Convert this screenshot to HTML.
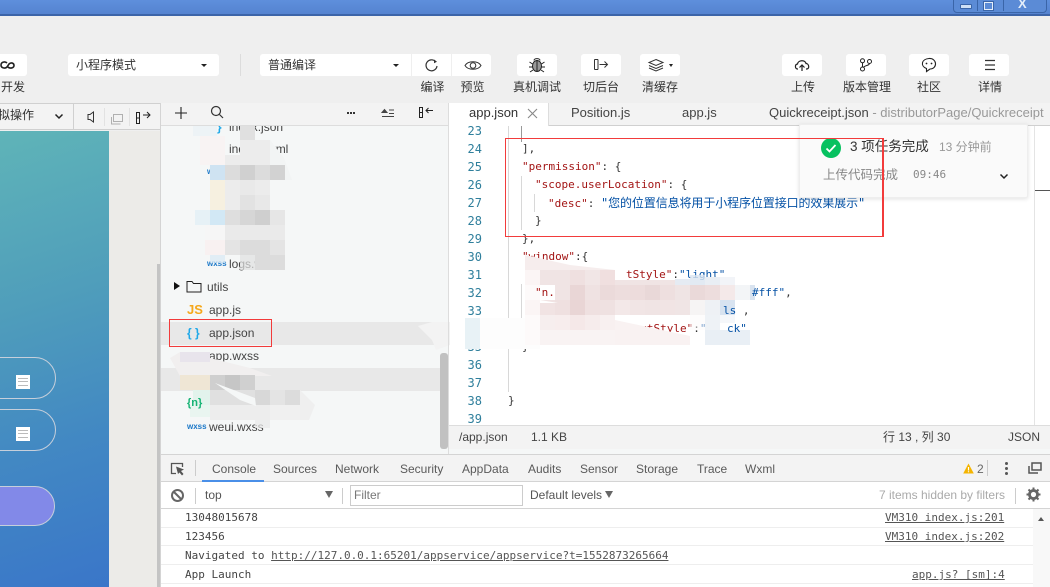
<!DOCTYPE html>
<html><head><meta charset="utf-8"><style>
html,body{margin:0;padding:0;width:1050px;height:587px;overflow:hidden;background:#efefef}
body{position:relative;font-family:"Liberation Sans","Noto Sans CJK SC",sans-serif;font-size:12px;color:#333}
.a{position:absolute}
.t{position:absolute;white-space:nowrap}
.b{position:absolute;background:#fff;border-radius:3px;top:54px;height:22px}
.l{position:absolute;top:79px;line-height:17px;font-size:12px;color:#333;white-space:nowrap;text-align:center}
.c{position:absolute;white-space:nowrap;font-family:"DejaVu Sans Mono","Noto Sans CJK SC",monospace;font-size:11px;line-height:18px;height:18px}
.n{position:absolute;left:460px;width:22px;text-align:right;font-family:"DejaVu Sans Mono",monospace;font-size:12px;line-height:18px;color:#2f7f9c}
.k{color:#a31515}.s{color:#0451a5}
.f{position:absolute;white-space:nowrap;font-size:12px;line-height:18px;color:#444}
.m{position:absolute;white-space:nowrap;font-family:"DejaVu Sans Mono",monospace;font-size:11px;line-height:16px;color:#444}
.r{text-decoration:underline;color:#555}
.d{position:absolute;top:461px;line-height:16px;font-size:12px;color:#5a5a5a;white-space:nowrap}
svg{position:absolute;overflow:visible}
</style></head><body>

<!-- title bar -->
<div class="a" style="left:0;top:0;width:1050px;height:14px;background:linear-gradient(#5e8fdc,#5583d0)"></div>
<div class="a" style="left:0;top:14px;width:1050px;height:2px;background:#3c64a8"></div>
<div class="a" style="left:953px;top:-2px;width:92px;height:13px;border:1px solid #3a65a8;border-radius:0 0 4px 4px;background:#5b8bd6"></div>
<div class="a" style="left:977px;top:0;width:1px;height:11px;background:#3a65a8"></div>
<div class="a" style="left:1003px;top:0;width:1px;height:11px;background:#3a65a8"></div>
<div class="a" style="left:960px;top:4px;width:10px;height:3px;background:#cfe0f5;border:1px solid #3a65a8;border-radius:1px"></div>
<div class="a" style="left:984px;top:2px;width:7px;height:6px;border:1px solid #e4eefa;outline:1px solid #3a65a8"></div>
<div class="t" style="left:1018px;top:-3px;font-size:13px;line-height:14px;color:#e4eefa;font-weight:bold">X</div>

<!-- toolbar -->
<div class="b" style="left:-4px;width:31px"></div>
<svg style="left:0;top:58px" width="16" height="14" viewBox="0 0 16 14"><path d="M7 5C5 3 1 4 1 7s4 4 6 2l2-3c2-2 5-1 5 1.500S10 11 8 9" fill="none" stroke="#222" stroke-width="1.600"/></svg>
<div class="l" style="left:0;width:26px">开发</div>

<div class="b" style="left:68px;width:151px"></div>
<div class="t" style="left:76px;top:57px;line-height:17px;font-size:12px">小程序模式</div>
<div class="a" style="left:201px;top:64px;border:3px solid transparent;border-top:3px solid #222;border-bottom:0"></div>
<div class="a" style="left:240px;top:54px;width:1px;height:22px;background:#dcdcdc"></div>

<div class="b" style="left:260px;width:151px;border-radius:3px 0 0 3px"></div>
<div class="t" style="left:268px;top:57px;line-height:17px;font-size:12px">普通编译</div>
<div class="a" style="left:393px;top:64px;border:3px solid transparent;border-top:3px solid #222;border-bottom:0"></div>
<div class="b" style="left:412px;width:39px;border-radius:0"></div>
<div class="b" style="left:452px;width:39px;border-radius:0 3px 3px 0"></div>
<svg style="left:424px;top:57px" width="16" height="16" viewBox="0 0 16 16"><path d="M11.500 4.500A5.500 5.500 0 1 0 13 9" fill="none" stroke="#333" stroke-width="1.200"/><path d="M10 2.500l3 2.300-3 1.500z" fill="#333"/></svg>
<svg style="left:464px;top:59px" width="18" height="13" viewBox="0 0 18 13"><path d="M1 6.500C4 1.500 14 1.500 17 6.500 14 11.500 4 11.500 1 6.500z" fill="none" stroke="#333"/><circle cx="9" cy="6.500" r="2.800" fill="none" stroke="#333"/></svg>
<div class="l" style="left:413px;width:39px">编译</div>
<div class="l" style="left:453px;width:39px">预览</div>

<div class="b" style="left:517px;width:40px"></div>
<svg style="left:528px;top:57px" width="18" height="16" viewBox="0 0 18 16"><ellipse cx="9" cy="9" rx="4.500" ry="5.500" fill="#999" stroke="#222"/><path d="M9 3v11M6 3.500C6 1 12 1 12 3.500M4.500 7L1.500 5M4.500 10H1M5 13l-3 2M13.500 7l3-2M13.500 10H17M13 13l3 2" fill="none" stroke="#222"/></svg>
<div class="l" style="left:507px;width:60px">真机调试</div>
<div class="b" style="left:581px;width:40px"></div>
<svg style="left:593px;top:58px" width="16" height="14" viewBox="0 0 16 14"><path d="M1.500 1.500v10M5 1.500v10M1.500 1.500H5M1.500 11.500H5M6.500 6.500h8M11.500 3.500l3 3-3 3" fill="none" stroke="#333"/></svg>
<div class="l" style="left:581px;width:40px">切后台</div>
<div class="b" style="left:640px;width:40px"></div>
<svg style="left:648px;top:59px" width="16" height="13" viewBox="0 0 16 13"><path d="M8 .5l7 3-7 3-7-3zM1 6.500l7 3 7-3M1 9l7 3 7-3" fill="none" stroke="#333"/></svg>
<div class="a" style="left:669px;top:64px;border:2.500px solid transparent;border-top:3px solid #222;border-bottom:0"></div>
<div class="l" style="left:640px;width:40px">清缓存</div>

<div class="b" style="left:782px;width:40px"></div>
<svg style="left:794px;top:58px" width="16" height="14" viewBox="0 0 16 14"><path d="M4 11H3.500C1 11 .5 6.500 3.500 6 4 2 11 1.500 12 5.500c3 0 4 5.500.5 5.500H12" fill="none" stroke="#222" stroke-width="1.200"/><path d="M8 13V7.500M5.500 9.500L8 7l2.500 2.500" fill="none" stroke="#222" stroke-width="1.200"/></svg>
<div class="l" style="left:783px;width:40px">上传</div>
<div class="b" style="left:846px;width:40px"></div>
<svg style="left:859px;top:58px" width="14" height="14" viewBox="0 0 14 14"><circle cx="3.500" cy="2.800" r="2" fill="none" stroke="#222"/><circle cx="3.500" cy="11" r="2" fill="none" stroke="#222"/><circle cx="10.500" cy="3.500" r="2" fill="none" stroke="#222"/><path d="M3.500 5v4M10.500 5.500C10 8 6 7 4.500 9.500" fill="none" stroke="#222"/></svg>
<div class="l" style="left:837px;width:60px">版本管理</div>
<div class="b" style="left:909px;width:40px"></div>
<svg style="left:921px;top:57px" width="16" height="16" viewBox="0 0 16 16"><path d="M8 1.500c8-.5 9 10 1 10.500L5.500 14.500V11.500C-1 9 .5 2 8 1.500z" fill="none" stroke="#222" stroke-width="1.100"/><circle cx="5.500" cy="6.500" r=".9" fill="#222"/><circle cx="10.500" cy="6.500" r=".9" fill="#222"/></svg>
<div class="l" style="left:909px;width:40px">社区</div>
<div class="b" style="left:969px;width:40px"></div>
<svg style="left:984px;top:59px" width="12" height="12" viewBox="0 0 12 12"><path d="M1 1.500h10M1 6h10M1 10.500h10" stroke="#333" stroke-width="1.200"/></svg>
<div class="l" style="left:970px;width:40px">详情</div>

<!-- simulator -->
<div class="a" style="left:0;top:103px;width:160px;height:27px;background:#f3f3f3;border-top:1px solid #d0d0d0;border-bottom:1px solid #d0d0d0;box-sizing:border-box"></div>
<div class="t" style="left:-2px;top:107px;line-height:17px;font-size:12px;color:#333">拟操作</div>
<svg style="left:54px;top:113px" width="10" height="7" viewBox="0 0 10 7"><path d="M1.500 1.500L5 5l3.500-3.500" fill="none" stroke="#222" stroke-width="1.500"/></svg>
<div class="a" style="left:73px;top:104px;width:1px;height:26px;background:#d0d0d0"></div>
<svg style="left:87px;top:111px" width="8" height="12" viewBox="0 0 8 12"><path d="M6.500 1v10L3 8.500H1v-5h2z" fill="none" stroke="#333"/></svg>
<div class="a" style="left:104px;top:108px;width:1px;height:18px;background:#e2e2e2"></div>
<svg style="left:110px;top:113px" width="14" height="12" viewBox="0 0 14 12"><path d="M3.500 1.500h9v7h-9zM1.500 4v7h9" fill="none" stroke="#b0b0b0"/></svg>
<div class="a" style="left:129px;top:108px;width:1px;height:18px;background:#e2e2e2"></div>
<svg style="left:135px;top:110px" width="17" height="15" viewBox="0 0 17 15"><path d="M1.500 2.500h3v11h-3zM1.500 8h3M8 5h7M12 2l3 3-3 3" fill="none" stroke="#222"/></svg>
<div class="a" style="left:0;top:131px;width:109px;height:456px;background:linear-gradient(162deg,#5fb4b8 0%,#4f9dbb 38%,#4288c3 68%,#3a76c9 100%)"></div>
<div class="a" style="left:109px;top:131px;width:48px;height:456px;background:#ecebe8"></div>
<div class="a" style="left:157px;top:131px;width:3px;height:456px;background:#ecebe8"></div>
<div class="a" style="left:157px;top:264px;width:3px;height:323px;background:#c4c4c4"></div>
<div class="a" style="left:160px;top:103px;width:1px;height:484px;background:#d4d4d4"></div>
<div class="a" style="left:-40px;top:357px;width:94px;height:40px;border:1px solid #c6cfdb;border-radius:21px"></div>
<div class="a" style="left:-40px;top:409px;width:94px;height:40px;border:1px solid #c6cfdb;border-radius:21px"></div>
<div class="a" style="left:-40px;top:486px;width:93px;height:38px;border:1px solid #c6cfdb;border-radius:20px;background:#8289e8"></div>
<div class="a" style="left:16px;top:375px;width:14px;height:14px;background:#fff"></div>
<div class="a" style="left:18px;top:378px;width:10px;height:1px;background:#bbb;box-shadow:0 3px 0 #bbb,0 7px 0 #bbb"></div>
<div class="a" style="left:16px;top:427px;width:14px;height:14px;background:#fff"></div>
<div class="a" style="left:18px;top:430px;width:10px;height:1px;background:#bbb;box-shadow:0 3px 0 #bbb,0 7px 0 #bbb"></div>

<!-- file tree -->
<div class="a" style="left:161px;top:125px;width:287px;height:329px;background:#f5f7f7"></div>
<div class="a" style="left:161px;top:322px;width:288px;height:23px;background:#e8e8e8"></div>
<div class="a" style="left:161px;top:368px;width:279px;height:23px;background:#e8e8e8"></div>

<div class="f" style="left:229px;top:118px">index.json</div>
<div class="f" style="left:229px;top:140px">index.wxml</div>
<div class="f" style="left:207px;top:163px;color:#1b78c8;font-size:8px;font-weight:bold">w</div>
<div class="f" style="left:229px;top:255px">logs.wxss</div>
<div class="f" style="left:207px;top:255px;color:#1b78c8;font-size:8px;font-weight:bold">wxss</div>
<div class="f" style="left:207px;top:278px">utils</div>
<div class="a" style="left:174px;top:282px;border:4px solid transparent;border-left:6px solid #111;border-right:0"></div>
<svg style="left:186px;top:280px" width="16" height="13" viewBox="0 0 16 13"><path d="M1 12V1.500h5l1.500 2h7.500V12z" fill="none" stroke="#222"/></svg>
<div class="f" style="left:187px;top:301px;color:#f5a81c;font-weight:bold;font-size:13px">JS</div>
<div class="f" style="left:209px;top:301px">app.js</div>
<div class="f" style="left:187px;top:324px;color:#1fa8e8;font-weight:bold;font-size:12px">{ }</div>
<div class="f" style="left:209px;top:324px">app.json</div>
<div class="f" style="left:209px;top:347px">app.wxss</div>
<div class="f" style="left:209px;top:394px">project.config</div>
<div class="f" style="left:187px;top:418px;color:#1b78c8;font-size:8px;font-weight:bold">wxss</div>
<div class="f" style="left:209px;top:418px">weui.wxss</div>
<div class="a" style="left:440px;top:353px;width:8px;height:96px;background:#c1c1c1;border-radius:3px"></div>

<!-- editor -->
<div class="a" style="left:449px;top:126px;width:601px;height:299px;background:#fff"></div>
<div class="n" style="top:122px">23</div><div class="n" style="top:140px">24</div><div class="n" style="top:158px">25</div><div class="n" style="top:176px">26</div><div class="n" style="top:194px">27</div><div class="n" style="top:212px">28</div><div class="n" style="top:230px">29</div><div class="n" style="top:248px">30</div><div class="n" style="top:266px">31</div><div class="n" style="top:284px">32</div><div class="n" style="top:302px">33</div><div class="n" style="top:320px">34</div><div class="n" style="top:338px">35</div><div class="n" style="top:356px">36</div><div class="n" style="top:374px">37</div><div class="n" style="top:392px">38</div><div class="n" style="top:410px">39</div>
<div class="a" style="left:508px;top:126px;width:1px;height:266px;background:#d8d8d8"></div>
<div class="a" style="left:521px;top:126px;width:1px;height:16px;background:#999"></div>
<div class="a" style="left:521px;top:176px;width:1px;height:54px;background:#d8d8d8"></div>
<div class="a" style="left:534px;top:194px;width:1px;height:18px;background:#d8d8d8"></div>
<div class="a" style="left:521px;top:284px;width:1px;height:54px;background:#d8d8d8"></div>

<div class="c" style="left:522px;top:140px">],</div>
<div class="c" style="left:522px;top:158px"><span class="k">"permission"</span>: {</div>
<div class="c" style="left:535px;top:176px"><span class="k">"scope.userLocation"</span>: {</div>
<div class="c" style="left:548px;top:194px"><span class="k">"desc"</span>: <span class="s" style="font-size:12px;letter-spacing:-.1px">"您的位置信息将用于小程序位置接口的效果展示"</span></div>
<div class="c" style="left:535px;top:212px">}</div>
<div class="c" style="left:522px;top:230px">},</div>
<div class="c" style="left:522px;top:248px"><span class="k">"window"</span>:{</div>
<div class="c" style="left:626px;top:266px"><span class="k">tStyle"</span>:<span class="s">"light"</span></div>
<div class="c" style="left:627px;top:320px"><span class="k">TextStyle"</span>:<span class="s">"</span></div>
<div class="c" style="left:522px;top:338px">}</div>
<div class="c" style="left:508px;top:392px">}</div>

<!-- mosaics + smears -->
<svg style="left:0;top:0" width="1050" height="587" viewBox="0 0 1050 587">
<g>
<rect x="193" y="126" width="24" height="10" fill="#edf3f6"/>
<rect x="200" y="136" width="25" height="29" fill="#f8f3f3"/>
<rect x="240" y="126" width="15" height="14" fill="#e0e0e0"/>
<path d="M240 140H270L285 165 288 180H225V155H240z" fill="#ececec"/>
<path d="M270 140l14 18 8 22h-22z" fill="#f2f4f4"/>
<rect x="210" y="165" width="15" height="15" fill="#cfe3f2"/><rect x="225" y="165" width="15" height="15" fill="#dcdcdc"/><rect x="240" y="165" width="15" height="15" fill="#d0d0d0"/><rect x="255" y="165" width="15" height="15" fill="#dcdcdc"/><rect x="270" y="165" width="15" height="15" fill="#d2d2d2"/>
<rect x="210" y="180" width="15" height="30" fill="#f6f0e0"/><rect x="225" y="180" width="15" height="30" fill="#ececec"/><rect x="240" y="180" width="15" height="15" fill="#e9e9e9"/><rect x="255" y="180" width="15" height="15" fill="#ececec"/><rect x="240" y="195" width="15" height="15" fill="#e2e2e2"/><rect x="255" y="195" width="15" height="15" fill="#e8e8e8"/>
<rect x="195" y="210" width="15" height="15" fill="#e6f1f6"/><rect x="210" y="210" width="15" height="15" fill="#d2e8f5"/><rect x="225" y="210" width="15" height="15" fill="#dedede"/><rect x="240" y="210" width="15" height="15" fill="#d6d6d6"/><rect x="255" y="210" width="15" height="15" fill="#cfcfcf"/><rect x="270" y="210" width="15" height="15" fill="#e6e6e6"/>
<rect x="205" y="225" width="20" height="15" fill="#f6f6f6"/><rect x="225" y="225" width="60" height="15" fill="#eaeaea"/>
<rect x="205" y="240" width="20" height="15" fill="#f8f1f1"/><rect x="225" y="240" width="15" height="15" fill="#e4e4e4"/><rect x="240" y="240" width="30" height="15" fill="#dcdcdc"/><rect x="270" y="240" width="15" height="15" fill="#e4e4e4"/>
<rect x="210" y="255" width="15" height="8" fill="#d8e8f4" opacity=".7"/><rect x="255" y="255" width="30" height="15" fill="#dcdcdc"/><rect x="240" y="255" width="15" height="15" fill="#e0e0e0" opacity=".7"/>

<path d="M418 326L432 322 450 322 450 345 436 350 432 340z" fill="#f3f3f3"/>

<path d="M170 358L180 352 210 352 210 358 250 368 272 376 180 376z" fill="#f1efef"/>
<rect x="180" y="352" width="30" height="10" fill="#e8e4ec"/>
<rect x="180" y="375" width="30" height="15" fill="#efe6d5"/><rect x="210" y="375" width="15" height="15" fill="#cfcfcf"/><rect x="225" y="375" width="15" height="15" fill="#c6c6c6"/><rect x="240" y="375" width="15" height="15" fill="#d0d0d0"/>
<rect x="193" y="390" width="17" height="15" fill="#e2f3ec"/><rect x="190" y="405" width="20" height="12" fill="#e9f5f0"/>
<rect x="210" y="390" width="45" height="15" fill="#e0e0e0"/><rect x="255" y="390" width="15" height="15" fill="#d8d8d8"/><rect x="270" y="390" width="15" height="15" fill="#e4e4e4"/><rect x="285" y="390" width="15" height="15" fill="#dcdcdc"/>
<rect x="210" y="405" width="60" height="15" fill="#ededed"/><rect x="270" y="405" width="30" height="15" fill="#f0f0f0"/><path d="M300 390l15 15-6 15h-9z" fill="#efefef"/>
<rect x="255" y="420" width="15" height="8" fill="#e8e8e8" opacity=".7"/>
<path d="M215 383L255 398 256 406 240 400z" fill="#f5f7f7"/>
</g>
<g>
<path d="M525 255L570 265 615 270 615 285 525 285z" fill="#f6eded"/>
<rect x="525" y="270" width="15" height="15" fill="#fbf5f5"/>
<rect x="540" y="270" width="30" height="15" fill="#f0e4e4"/><rect x="570" y="270" width="15" height="15" fill="#efe0e0"/><rect x="585" y="270" width="15" height="15" fill="#f1e6e6"/><rect x="600" y="270" width="15" height="15" fill="#f0dfdf"/>
<rect x="615" y="280" width="60" height="5" fill="#f0e4e4"/><rect x="675" y="279" width="15" height="6" fill="#e5ebf3"/><rect x="690" y="275" width="15" height="10" fill="#dbe5f0" opacity=".8"/><rect x="705" y="277" width="15" height="8" fill="#e9eef4"/><rect x="720" y="277" width="15" height="8" fill="#f2f4f8"/>

<rect x="525" y="285" width="15" height="15" fill="#fdfafa"/>
<rect x="555" y="285" width="15" height="15" fill="#f0e4e4"/><rect x="570" y="285" width="15" height="15" fill="#e9d6d6"/><rect x="585" y="285" width="15" height="15" fill="#efe2e2"/><rect x="600" y="285" width="15" height="15" fill="#ebdada"/><rect x="615" y="285" width="15" height="15" fill="#eddddd"/><rect x="630" y="285" width="15" height="15" fill="#eddcdc"/><rect x="645" y="285" width="15" height="15" fill="#e9d8d8"/><rect x="660" y="285" width="15" height="15" fill="#eedfdf"/><rect x="675" y="285" width="15" height="15" fill="#efe4e4"/><rect x="690" y="285" width="15" height="15" fill="#ead9d9"/><rect x="705" y="285" width="15" height="15" fill="#eddddd"/><rect x="720" y="285" width="15" height="15" fill="#f4e9e9"/><rect x="735" y="285" width="15" height="15" fill="#f3f5f7"/><rect x="750" y="285" width="5" height="15" fill="#d9e3ef"/>

<rect x="525" y="300" width="15" height="15" fill="#fbf5f5"/><rect x="540" y="300" width="15" height="15" fill="#f1e3e3"/><rect x="555" y="300" width="15" height="15" fill="#efe0e0"/><rect x="570" y="300" width="15" height="15" fill="#e9d5d5"/><rect x="585" y="300" width="15" height="15" fill="#efe0e0"/><rect x="600" y="300" width="15" height="15" fill="#efe1e1"/><rect x="615" y="300" width="15" height="15" fill="#f3e8e8"/><rect x="630" y="300" width="15" height="15" fill="#f1e5e5"/><rect x="645" y="300" width="15" height="15" fill="#f0e4e4"/><rect x="660" y="300" width="15" height="15" fill="#f1e4e4"/><rect x="675" y="300" width="15" height="15" fill="#f0e5e5"/><rect x="690" y="300" width="15" height="15" fill="#f6f4f4"/><rect x="705" y="300" width="15" height="15" fill="#eef1f5"/><rect x="720" y="300" width="15" height="15" fill="#d8e3f0"/>
<path d="M540 300l18 3-18 0z" fill="#fff"/>

<rect x="525" y="315" width="15" height="30" fill="#fdfafa"/>
<rect x="540" y="315" width="15" height="15" fill="#f6eeee"/><rect x="555" y="315" width="15" height="15" fill="#f7eded"/><rect x="570" y="315" width="15" height="15" fill="#f5e8e8"/><rect x="585" y="315" width="15" height="15" fill="#f6ecec"/><rect x="600" y="315" width="15" height="15" fill="#f8f0f0"/>
<path d="M615 320L690 336 690 345 615 345z" fill="#f9f2f2"/>
<rect x="540" y="330" width="75" height="15" fill="#f9f3f3"/>
<rect x="690" y="315" width="15" height="15" fill="#fbf9f9" opacity=".5"/><rect x="705" y="315" width="15" height="15" fill="#eef2f6"/><rect x="720" y="315" width="15" height="8" fill="#f5f7fa"/>
<rect x="705" y="330" width="45" height="15" fill="#e9eff5"/>
<rect x="465" y="318" width="15" height="31" fill="#e8f2f6"/>
<rect x="480" y="318" width="45" height="31" fill="#fdfdfd"/>
<rect x="525" y="345" width="15" height="4" fill="#fdfdfd"/>
</g>
</svg>
<div class="f" style="left:187px;top:394px;color:#15b374;font-weight:bold;font-size:11px">{n}</div>
<div class="f" style="left:217px;top:118px;color:#1fa8e8;font-weight:bold">}</div>
<div class="c" style="left:535px;top:284px"><span class="k">"n.</span></div>
<div class="c" style="left:752px;top:284px"><span class="s">#fff"</span>,</div>
<div class="c" style="left:723px;top:302px"><span class="s">ls</span> ,</div>
<div class="c" style="left:727px;top:320px"><span class="s">ck"</span></div>

<!-- tree header & tabs on top of smears -->
<div class="a" style="left:161px;top:103px;width:287px;height:22px;background:#f3f3f3"></div>
<div class="a" style="left:161px;top:125px;width:287px;height:1px;background:#ddd"></div>
<svg style="left:174px;top:106px" width="14" height="14" viewBox="0 0 14 14"><path d="M7 1v12M1 7h12" stroke="#222" stroke-width="1.100"/></svg>
<svg style="left:210px;top:105px" width="14" height="14" viewBox="0 0 14 14"><circle cx="6" cy="6" r="4.500" fill="none" stroke="#333" stroke-width="1.200"/><path d="M9.500 9.500l3.500 3.500" stroke="#333" stroke-width="1.200"/></svg>
<div class="a" style="left:347px;top:112px;width:2px;height:2px;background:#333;box-shadow:3px 0 0 #333,6px 0 0 #333"></div>
<svg style="left:381px;top:108px" width="14" height="10" viewBox="0 0 14 10"><path d="M1 4.500L3.500 1.500 6 4.500zM8 2h5M8 5.500h5M1 8.500h12" stroke="#444" fill="#444" stroke-width="1"/></svg>
<svg style="left:418px;top:106px" width="16" height="13" viewBox="0 0 16 13"><path d="M1.500 1.500h3v10h-3zM1.500 6.500h3M15 4.500H8M10.500 2L8 4.500 10.500 7" fill="none" stroke="#222"/></svg>
<div class="a" style="left:448px;top:103px;width:1px;height:351px;background:#ddd"></div>

<div class="a" style="left:449px;top:103px;width:601px;height:22px;background:#f3f3f3"></div>
<div class="a" style="left:449px;top:125px;width:601px;height:1px;background:#d0d0d0"></div>
<div class="a" style="left:449px;top:103px;width:100px;height:23px;background:#fff;border-right:1px solid #ddd;box-sizing:border-box"></div>
<div class="t" style="left:469px;top:104px;line-height:17px;font-size:13px;color:#333">app.json</div>
<svg style="left:527px;top:108px" width="11" height="11" viewBox="0 0 11 11"><path d="M1 1l9 9M10 1l-9 9" stroke="#888" stroke-width="1.100"/></svg>
<div class="t" style="left:571px;top:104px;line-height:17px;font-size:13px;color:#444">Position.js</div>
<div class="t" style="left:682px;top:104px;line-height:17px;font-size:13px;color:#444">app.js</div>
<div class="t" style="left:769px;top:104px;line-height:17px;font-size:13px;color:#444">Quickreceipt.json <span style="color:#999">- distributorPage/Quickreceipt</span></div>

<!-- red rects -->
<div class="a" style="left:505px;top:138px;width:377px;height:97px;border:1px solid #f23b3b;z-index:4"></div>
<div class="a" style="left:169px;top:319px;width:103px;height:1px;background:#f23b3b;z-index:6"></div>
<div class="a" style="left:169px;top:346px;width:103px;height:1px;background:#f23b3b;z-index:6"></div>
<div class="a" style="left:169px;top:319px;width:1px;height:28px;background:#f23b3b;z-index:6"></div>
<div class="a" style="left:271px;top:319px;width:1px;height:28px;background:#f23b3b;z-index:6"></div>

<!-- minimap -->
<div class="a" style="left:1034px;top:126px;width:1px;height:299px;background:#e4e4e4"></div>
<div class="a" style="left:1035px;top:190px;width:15px;height:1px;background:#555"></div>

<!-- notification -->
<div class="a" style="left:799px;top:124px;width:229px;height:74px;background:#fafafa;border:1px solid #eee;border-radius:2px;box-shadow:0 1px 4px rgba(0,0,0,.12);z-index:3;box-sizing:border-box"></div>
<svg style="left:821px;top:138px;z-index:3" width="20" height="20" viewBox="0 0 20 20"><circle cx="10" cy="10" r="10" fill="#07c160"/><path d="M5.500 10.500l3 3 6-6.500" fill="none" stroke="#fff" stroke-width="1.800"/></svg>
<div class="t" style="left:850px;top:138px;line-height:18px;font-size:13.500px;color:#333;z-index:3">3 项任务完成</div>
<div class="t" style="left:939px;top:138px;line-height:18px;font-size:12px;color:#999;z-index:3">13 分钟前</div>
<div class="t" style="left:823px;top:166px;line-height:18px;font-size:12.500px;color:#888;z-index:3">上传代码完成</div>
<div class="t" style="left:913px;top:167px;line-height:16px;font-family:'DejaVu Sans Mono',monospace;font-size:11px;color:#888;z-index:3">09:46</div>
<svg style="left:999px;top:173px;z-index:3" width="10" height="7" viewBox="0 0 10 7"><path d="M1.500 1.500L5 5l3.500-3.500" fill="none" stroke="#222" stroke-width="1.500"/></svg>
<div class="a" style="left:882px;top:138px;width:1px;height:98px;background:#f23b3b;z-index:5"></div>

<!-- status bar -->
<div class="a" style="left:449px;top:425px;width:601px;height:24px;background:#f3f3f3;border-top:1px solid #ddd;box-sizing:border-box"></div>
<div class="a" style="left:449px;top:449px;width:601px;height:5px;background:#f5f7f7"></div>
<div class="t" style="left:459px;top:428px;line-height:18px;font-size:12px;color:#444">/app.json</div>
<div class="t" style="left:531px;top:428px;line-height:18px;font-size:12px;color:#444">1.1 KB</div>
<div class="t" style="left:883px;top:428px;line-height:18px;font-size:12px;color:#444">行 13 , 列 30</div>
<div class="t" style="left:1008px;top:428px;line-height:18px;font-size:12px;color:#444">JSON</div>

<!-- devtools -->
<div class="a" style="left:161px;top:454px;width:889px;height:28px;background:#f3f3f3;border-top:1px solid #d4d4d4;border-bottom:1px solid #d4d4d4;box-sizing:border-box"></div>
<svg style="left:170px;top:461px" width="16" height="15" viewBox="0 0 16 15"><path d="M6 12.500H1.500v-10h11V6" fill="none" stroke="#555" stroke-width="1.300"/><path d="M6 5.500l8 3-3 1.500 2.500 3-1.500 1.500-2.500-3L8 13z" fill="#555"/></svg>
<div class="a" style="left:195px;top:460px;width:1px;height:16px;background:#ccc"></div>
<div class="d" style="left:212px">Console</div>
<div class="a" style="left:202px;top:480px;width:62px;height:2px;background:#4a8fe8"></div>
<div class="d" style="left:273px">Sources</div>
<div class="d" style="left:335px">Network</div>
<div class="d" style="left:400px">Security</div>
<div class="d" style="left:462px">AppData</div>
<div class="d" style="left:528px">Audits</div>
<div class="d" style="left:580px">Sensor</div>
<div class="d" style="left:636px">Storage</div>
<div class="d" style="left:697px">Trace</div>
<div class="d" style="left:745px">Wxml</div>
<svg style="left:963px;top:463px" width="11" height="11" viewBox="0 0 11 11"><path d="M5.500 .5L10.800 10.500H.2z" fill="#f4b400"/><path d="M5.500 4v3.500M5.500 8.300v1" stroke="#fff" stroke-width="1.200"/></svg>
<div class="d" style="left:977px;color:#666">2</div>
<div class="a" style="left:987px;top:460px;width:1px;height:16px;background:#ccc"></div>
<div class="a" style="left:1005px;top:462px;width:3px;height:3px;border-radius:2px;background:#555;box-shadow:0 5px 0 #555,0 10px 0 #555"></div>
<svg style="left:1028px;top:462px" width="14" height="12" viewBox="0 0 14 12"><path d="M4 1h9v7H4zM1 4v7h9" fill="none" stroke="#555" stroke-width="1.500"/></svg>

<div class="a" style="left:161px;top:482px;width:889px;height:27px;background:#fff;border-bottom:1px solid #d4d4d4;box-sizing:border-box"></div>
<svg style="left:170px;top:488px" width="15" height="15" viewBox="0 0 15 15"><circle cx="7.500" cy="7.500" r="5.500" fill="none" stroke="#666" stroke-width="2"/><path d="M3.500 3.500l8 8" stroke="#666" stroke-width="2"/></svg>
<div class="a" style="left:195px;top:488px;width:1px;height:16px;background:#ccc"></div>
<div class="t" style="left:205px;top:487px;line-height:17px;font-size:12px;color:#555">top</div>
<div class="a" style="left:325px;top:491px;border:4px solid transparent;border-top:7px solid #666;border-bottom:0"></div>
<div class="a" style="left:342px;top:488px;width:1px;height:16px;background:#ccc"></div>
<div class="a" style="left:350px;top:485px;width:171px;height:19px;border:1px solid #ccc"></div>
<div class="t" style="left:354px;top:487px;line-height:17px;font-size:12px;color:#777">Filter</div>
<div class="t" style="left:530px;top:487px;line-height:17px;font-size:12px;color:#555">Default levels</div>
<div class="a" style="left:605px;top:491px;border:4px solid transparent;border-top:7px solid #666;border-bottom:0"></div>
<div class="t" style="left:879px;top:487px;line-height:17px;font-size:12px;color:#aaa">7 items hidden by filters</div>
<div class="a" style="left:1015px;top:488px;width:1px;height:16px;background:#ccc"></div>
<svg style="left:1026px;top:487px" width="15" height="15" viewBox="0 0 15 15"><circle cx="7.500" cy="7.500" r="4" fill="none" stroke="#666" stroke-width="2.800"/><path d="M7.500 .5v3M7.500 11.500v3M.5 7.500h3M11.500 7.500h3M2.500 2.500l2 2M10.500 10.500l2 2M12.500 2.500l-2 2M4.500 10.500l-2 2" stroke="#666" stroke-width="2"/></svg>

<div class="a" style="left:161px;top:509px;width:889px;height:78px;background:#fff"></div>
<div class="a" style="left:1033px;top:509px;width:17px;height:78px;background:#f8f8f8"></div>
<div class="a" style="left:1038px;top:517px;border:3.500px solid transparent;border-bottom:4px solid #555;border-top:0"></div>
<div class="a" style="left:161px;top:527px;width:872px;height:1px;background:#eee"></div>
<div class="a" style="left:161px;top:545px;width:872px;height:1px;background:#eee"></div>
<div class="a" style="left:161px;top:564px;width:872px;height:1px;background:#eee"></div>
<div class="a" style="left:161px;top:583px;width:872px;height:1px;background:#eee"></div>
<div class="m" style="left:185px;top:510px">13048015678</div>
<div class="m" style="left:885px;top:510px"><span class="r">VM310 index.js:201</span></div>
<div class="m" style="left:185px;top:529px">123456</div>
<div class="m" style="left:885px;top:529px"><span class="r">VM310 index.js:202</span></div>
<div class="m" style="left:185px;top:548px">Navigated to <span class="r">http://127.0.0.1:65201/appservice/appservice?t=1552873265664</span></div>
<div class="m" style="left:185px;top:567px">App Launch</div>
<div class="m" style="left:912px;top:567px"><span class="r">app.js? [sm]:4</span></div>

</body></html>
